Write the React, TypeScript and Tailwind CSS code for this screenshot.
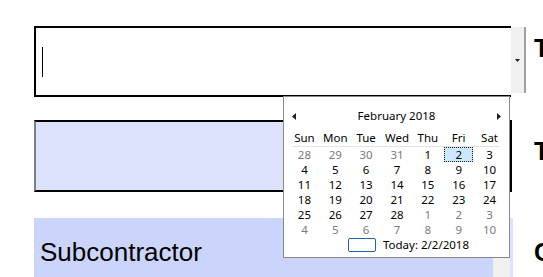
import React from "react";

const weekDays = ["Sun", "Mon", "Tue", "Wed", "Thu", "Fri", "Sat"];

// 6 weeks shown in the month grid, muted = outside February
const weeks: { d: number; muted?: boolean; selected?: boolean }[][] = [
  [{ d: 28, muted: true }, { d: 29, muted: true }, { d: 30, muted: true }, { d: 31, muted: true }, { d: 1 }, { d: 2, selected: true }, { d: 3 }],
  [{ d: 4 }, { d: 5 }, { d: 6 }, { d: 7 }, { d: 8 }, { d: 9 }, { d: 10 }],
  [{ d: 11 }, { d: 12 }, { d: 13 }, { d: 14 }, { d: 15 }, { d: 16 }, { d: 17 }],
  [{ d: 18 }, { d: 19 }, { d: 20 }, { d: 21 }, { d: 22 }, { d: 23 }, { d: 24 }],
  [{ d: 25 }, { d: 26 }, { d: 27 }, { d: 28 }, { d: 1, muted: true }, { d: 2, muted: true }, { d: 3, muted: true }],
  [{ d: 4, muted: true }, { d: 5, muted: true }, { d: 6, muted: true }, { d: 7, muted: true }, { d: 8, muted: true }, { d: 9, muted: true }, { d: 10, muted: true }],
];

function Calendar() {
  return (
    <div className="absolute left-[283px] top-[96px] w-[227px] h-[162px] bg-white border border-[#8a8a8a] font-['Noto_Sans',sans-serif] text-[11.5px] text-black leading-none">
      {/* month header */}
      <div className="mt-[12px] h-[14px] px-[8px] flex items-center justify-between">
        <svg width="4" height="7" viewBox="0 0 4 7">
          <path d="M4 0 L0 3.5 L4 7 Z" fill="#222" />
        </svg>
        <span>February 2018</span>
        <svg width="4" height="7" viewBox="0 0 4 7">
          <path d="M0 0 L4 3.5 L0 7 Z" fill="#222" />
        </svg>
      </div>

      {/* weekday names */}
      <div className="mt-[8px] ml-[5px] w-[216px] grid grid-cols-7 h-[14px] items-center">
        {weekDays.map((w) => (
          <span key={w} className="text-center">{w}</span>
        ))}
      </div>
      <div className="ml-[8px] w-[208px] h-px bg-[#e3e3e3] mt-[1px]" />

      {/* days */}
      <div className="ml-[5px] w-[216px]">
        {weeks.map((row, i) => (
          <div key={i} className="grid grid-cols-7 h-[15px]">
            {row.map((c, j) => (
              <div
                key={j}
                className={`flex items-center justify-center ${c.muted ? "text-[#7a7a7a]" : "text-black"} ${
                  c.selected ? "bg-[#cce8ff] border border-dotted border-[#1a1a1a] mx-[1px]" : ""
                }`}
              >
                {c.d}
              </div>
            ))}
          </div>
        ))}
      </div>

      {/* today */}
      <div className="h-[15px] flex items-center pl-[64px] gap-[7px]">
        <div className="w-[28px] h-[14px] border border-[#1e5fae] rounded-[2px]" />
        <span>Today: 2/2/2018</span>
      </div>
    </div>
  );
}

export default function App() {
  return (
    <div className="relative w-[543px] h-[277px] overflow-hidden bg-white font-['Liberation_Sans',Arial,sans-serif]">
      <div className="pl-[34px] pt-[26px] flex flex-col">
        {/* date input row */}
        <div className="flex items-start h-[71px]">
          <div className="shrink-0 w-[477px] h-[71px] border-y-2 border-l-2 border-black bg-white flex items-center pl-[6px]">
            <div className="w-px h-[30px] bg-black" />
          </div>
          <div className="shrink-0 w-[15px] h-[66px] mt-[1px] bg-[#f0f0f0] border-r-2 border-[#a0a0a0] flex items-center justify-center">
            <svg width="5" height="3" viewBox="0 0 5 3">
              <path d="M0 0 H5 L2.5 3 Z" fill="#222" />
            </svg>
          </div>
          <span className="shrink-0 ml-[8px] mt-[10px] text-[25px] font-bold leading-none text-black">T</span>
        </div>

        {/* second field */}
        <div className="flex items-start mt-[23px] h-[72px]">
          <div className="shrink-0 w-[478px] h-[72px] border-t-2 border-b-2 border-l-2 border-l-[#7f7f7f] border-r-[3px] border-black bg-[#dde3fc]" />
          <span className="shrink-0 ml-[22px] mt-[19px] text-[25px] font-bold leading-none text-black">T</span>
        </div>

        {/* subcontractor */}
        <div className="flex items-start mt-[26px] h-[60px]">
          <div className="shrink-0 w-[459px] h-[60px] bg-[#cbd4fb] pl-[6px] pt-[21px] text-[26px] leading-none text-black">
            Subcontractor
          </div>
          <div className="shrink-0 w-[17px] h-[60px] bg-[#f0f0f0]" />
          <div className="shrink-0 w-[3px] h-[60px] bg-[#dde3fc]" />
          <span className="shrink-0 ml-[21px] mt-[22px] text-[25px] font-bold leading-none text-black">C</span>
        </div>
      </div>

      <Calendar />
    </div>
  );
}
